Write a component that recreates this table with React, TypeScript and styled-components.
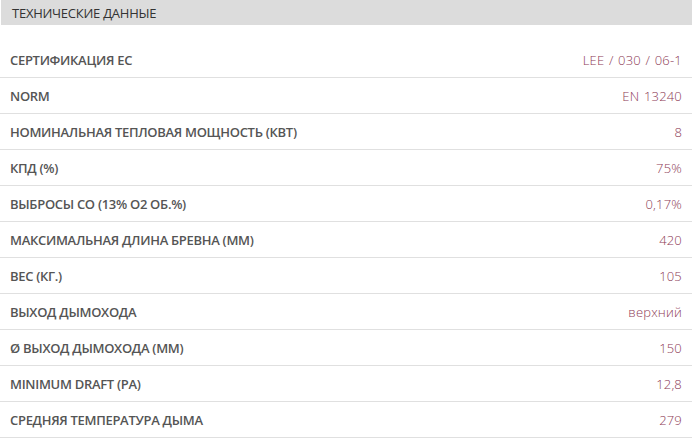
import React from "react";
import styled, { createGlobalStyle } from "styled-components";

const Global = createGlobalStyle`
  html, body { margin: 0; padding: 0; background: #fff; }
  body { font-family: "Open Sans", "Noto Sans", sans-serif; }
`;

const Wrap = styled.div`
  width: 692px;
  display: flex;
  flex-direction: column;
`;

const Header = styled.div`
  height: 25px;
  margin-left: 1px;
  background: #dcdcdc;
  display: flex;
  align-items: center;
  padding-left: 11px;
  font-size: 13px;
  font-weight: 400;
  color: #333;
  text-transform: uppercase;
  letter-spacing: -0.25px;
`;

const Table = styled.div`
  margin-top: 17px;
  display: flex;
  flex-direction: column;
`;

const Row = styled.div`
  height: 35px;
  border-bottom: 1px solid #e0e0e0;
  display: flex;
  align-items: center;
  justify-content: space-between;
  padding: 0 10px;
`;

const Label = styled.span`
  font-size: 13px;
  font-weight: 600;
  color: #555;
  letter-spacing: -0.3px;
`;

const Value = styled.span`
  font-size: 13px;
  font-weight: 300;
  color: #8c3a55;
  letter-spacing: 0.2px;
  word-spacing: 1px;
`;

const rows: [string, string][] = [
  ["СЕРТИФИКАЦИЯ ЕС", "LEE / 030 / 06-1"],
  ["NORM", "EN 13240"],
  ["НОМИНАЛЬНАЯ ТЕПЛОВАЯ МОЩНОСТЬ (КВТ)", "8"],
  ["КПД (%)", "75%"],
  ["ВЫБРОСЫ CO (13% O2 ОБ.%)", "0,17%"],
  ["МАКСИМАЛЬНАЯ ДЛИНА БРЕВНА (ММ)", "420"],
  ["ВЕС (КГ.)", "105"],
  ["ВЫХОД ДЫМОХОДА", "верхний"],
  ["Ø ВЫХОД ДЫМОХОДА (ММ)", "150"],
  ["MINIMUM DRAFT (PA)", "12,8"],
  ["СРЕДНЯЯ ТЕМПЕРАТУРА ДЫМА", "279"],
];

export default function App() {
  return (
    <>
      <Global />
      <Wrap>
        <Header>Технические данные</Header>
        <Table>
          {rows.map(([l, v]) => (
            <Row key={l}>
              <Label>{l}</Label>
              <Value>{v}</Value>
            </Row>
          ))}
        </Table>
      </Wrap>
    </>
  );
}
